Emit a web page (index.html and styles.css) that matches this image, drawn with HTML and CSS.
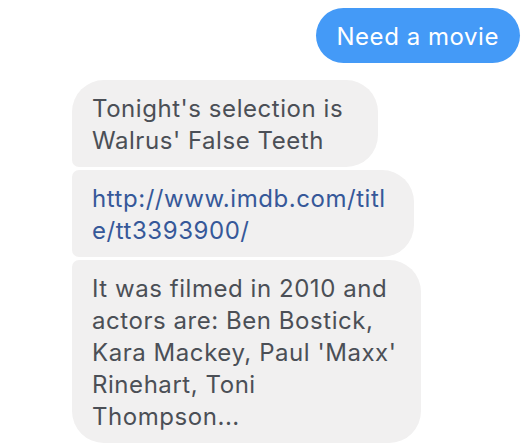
FILE: index.html
```html
<!DOCTYPE html>
<html>
<head>
<meta charset="utf-8">
<link rel="stylesheet" href="styles.css">
</head>
<body>
<div class="chat">
  <div class="row out">
    <div class="bubble blue">Need a movie</div>
  </div>
  <div class="group">
    <div class="bubble gray first">Tonight's selection is<br>Walrus' False Teeth</div>
    <div class="bubble gray mid"><a class="link" href="#">http://www.imdb.com/titl<br>e/tt3393900/</a></div>
    <div class="bubble gray last">It was filmed in 2010 and<br>actors are: Ben Bostick,<br>Kara Mackey, Paul 'Maxx'<br>Rinehart, Toni<br>Thompson...</div>
  </div>
</div>
</body>
</html>
```
FILE: styles.css
```css
html, body {
  margin: 0;
  padding: 0;
  background: #ffffff;
}
.chat {
  display: flex;
  flex-direction: column;
  padding: 8px 10px 0 72px;
  font-family: Inter, "Liberation Sans", sans-serif;
  font-size: 24px;
  line-height: 32px;
  letter-spacing: 0.55px;
}
.row.out {
  display: flex;
  justify-content: flex-end;
}
.bubble {
  padding: 13px 28px 10px 20px;
  white-space: nowrap;
}
.blue {
  background: #449af7;
  color: #ffffff;
  border-radius: 28px;
  padding: 13px 21px 10px 20px;
}
.group {
  margin-top: 17px;
  display: flex;
  flex-direction: column;
  align-items: flex-start;
  gap: 3px;
}
.gray {
  background: #f1f0f0;
  color: #4b4f56;
}
.first {
  border-radius: 32px 32px 32px 7px;
  padding-right: 35px;
}
.mid {
  border-radius: 7px 32px 32px 7px;
}
.last {
  border-radius: 7px 32px 32px 32px;
  padding-right: 24px;
}
.link {
  color: #365899;
  text-decoration: none;
}
```
